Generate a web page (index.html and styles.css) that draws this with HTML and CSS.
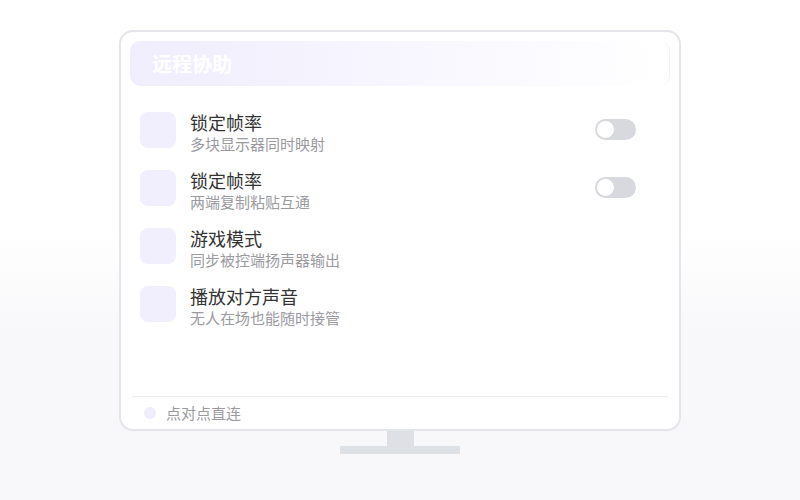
FILE: index.html
```html
<!DOCTYPE html>
<html lang="zh">
<head>
<meta charset="utf-8">
<link rel="stylesheet" href="styles.css">
</head>
<body>
<div class="stage">
  <div class="monitor">
    <div class="header">
      <span class="title">远程协助</span>
      <span class="dots"><i></i><i></i><i></i></span>
    </div>
    <div class="list">
      <div class="row">
        <div class="icon"></div>
        <div class="text"><div class="name">锁定帧率</div><div class="desc">多块显示器同时映射</div></div>
        <div class="toggle"><span class="knob"></span></div>
      </div>
      <div class="row">
        <div class="icon"></div>
        <div class="text"><div class="name">锁定帧率</div><div class="desc">两端复制粘贴互通</div></div>
        <div class="toggle"><span class="knob"></span></div>
      </div>
      <div class="row">
        <div class="icon"></div>
        <div class="text"><div class="name">游戏模式</div><div class="desc">同步被控端扬声器输出</div></div>
      </div>
      <div class="row">
        <div class="icon"></div>
        <div class="text"><div class="name">播放对方声音</div><div class="desc">无人在场也能随时接管</div></div>
      </div>
    </div>
    <div class="footer">
      <span class="fdot"></span>
      <span class="ftext">点对点直连</span>
    </div>
  </div>
  <div class="neck"></div>
  <div class="base"></div>
</div>
</body>
</html>
```

FILE: styles.css
```css
html, body {
  margin: 0;
  padding: 0;
}
body {
  width: 800px;
  height: 500px;
  background: linear-gradient(to bottom, #ffffff 0px, #ffffff 230px, #f8f8fa 330px, #f8f8fa 500px);
  font-family: "Noto Sans CJK SC", "Noto Sans", sans-serif;
  overflow: hidden;
}
.stage {
  display: flex;
  flex-direction: column;
  align-items: center;
  padding-top: 30px;
}
.monitor {
  box-sizing: border-box;
  width: 562px;
  height: 401px;
  border: 2px solid #e3e5ea;
  border-radius: 14px;
  background: #ffffff;
  padding: 9px 9px 0 9px;
  display: flex;
  flex-direction: column;
}
.header {
  height: 45px;
  border-radius: 10px;
  background: linear-gradient(to right, #f0edfd 0%, #f6f4fe 40%, #fcfcff 80%, #ffffff 100%);
  display: flex;
  align-items: center;
  justify-content: space-between;
  padding: 0 14px 0 22px;
  border-right: 1px solid #f0f0f3;
}
.title {
  color: #ffffff;
  font-size: 20px;
  font-weight: 700;
  line-height: 24px;
}
.dots {
  display: flex;
  gap: 6px;
  opacity: 0.6;
}
.dots i {
  width: 10px;
  height: 10px;
  border-radius: 50%;
  background: #ffffff;
  display: block;
}
.list {
  flex: 1;
  display: flex;
  flex-direction: column;
  gap: 16px;
  padding: 26px 34px 0 10px;
}
.row {
  display: flex;
  align-items: flex-start;
}
.icon {
  width: 36px;
  height: 36px;
  border-radius: 8px;
  background: #f1eefd;
  flex: none;
}
.text {
  flex: 1;
  margin-left: 14px;
  display: flex;
  flex-direction: column;
  gap: 2px;
}
.name {
  font-size: 18px;
  line-height: 20px;
  color: #333333;
}
.desc {
  font-size: 15px;
  line-height: 20px;
  color: #9a9aa0;
}
.toggle {
  width: 41px;
  height: 21px;
  border-radius: 11px;
  background: #d7d9de;
  margin-top: 7px;
  position: relative;
  flex: none;
}
.knob {
  position: absolute;
  left: 2px;
  top: 2px;
  width: 17px;
  height: 17px;
  border-radius: 50%;
  background: #ffffff;
}
.footer {
  height: 32px;
  border-top: 1px solid #ececf0;
  margin: 0 2px 0 2px;
  display: flex;
  align-items: center;
  padding-left: 12px;
}
.fdot {
  width: 12px;
  height: 12px;
  border-radius: 50%;
  background: #efecfc;
}
.ftext {
  margin-left: 10px;
  font-size: 15px;
  color: #9a9aa0;
  line-height: 20px;
}
.neck {
  width: 27px;
  height: 15px;
  background: #dde0e5;
}
.base {
  width: 120px;
  height: 8px;
  background: #dde0e5;
}
```
